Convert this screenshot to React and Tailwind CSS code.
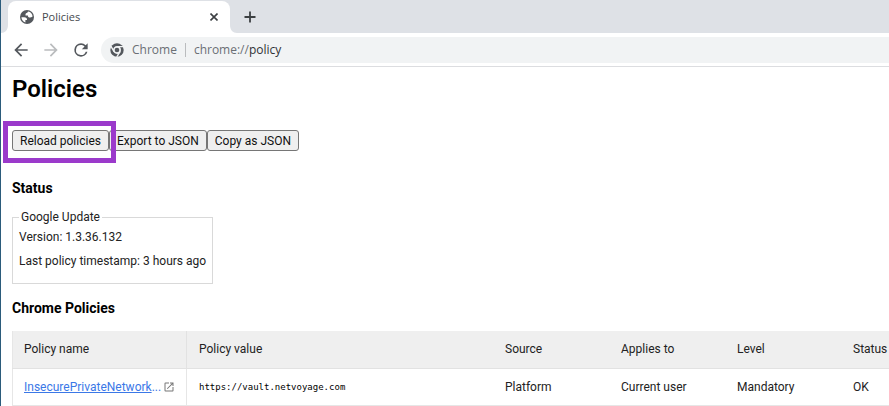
import React from "react";

function Globe() {
  return (
    <svg className="h-[14px] w-[14px] shrink-0" viewBox="0 0 14 14" aria-hidden="true">
      <circle cx="7" cy="7" r="7" fill="#54585d" />
      <path
        d="M1.400 7.200H4.200C6.200 7.200 7.200 8.100 7 10H5.400V12.400C3.200 11.800 1.500 9.800 1.400 7.200zM8.200 1.500C7.700 1.800 7.400 2.200 7.400 2.800 6 2.800 5.300 3.700 5.500 5.500H7.900C7.900 6.900 8.600 7.600 10 7.600 11 7.600 11.700 7.300 12.600 6.600 12.500 4.100 10.700 1.900 8.200 1.500z"
        fill="#fff"
      />
    </svg>
  );
}

function ChromeMark() {
  return (
    <svg className="h-[14px] w-[14px] shrink-0" viewBox="0 0 24 24" aria-hidden="true">
      <circle cx="12" cy="12" r="11.500" fill="#54585d" />
      <path d="M12 6.200H23M6.980 14.900L1.500 5.400M17.020 14.900L11.500 24" stroke="#f1f3f4" strokeWidth="2.400" />
      <circle cx="12" cy="12" r="5.400" fill="#54585d" stroke="#f1f3f4" strokeWidth="2.800" />
    </svg>
  );
}

function Icon({ d, className }) {
  return (
    <svg className={"shrink-0 " + className} viewBox="0 0 24 24" fill="currentColor" aria-hidden="true">
      <path d={d} />
    </svg>
  );
}

const BACK = "M20 11H7.830l5.590-5.590L12 4l-8 8 8 8 1.410-1.410L7.830 13H20v-2z";
const FORWARD = "M12 4l-1.410 1.410L16.170 11H4v2h12.170l-5.580 5.590L12 20l8-8z";
const RELOAD =
  "M17.650 6.350A7.958 7.958 0 0 0 12 4a8 8 0 1 0 7.730 10h-2.080A6 6 0 1 1 12 6c1.660 0 3.140.690 4.220 1.780L13 11h7V4l-2.350 2.350z";
const OPEN =
  "M19 19H5V5h7V3H5a2 2 0 0 0-2 2v14a2 2 0 0 0 2 2h14c1.100 0 2-.900 2-2v-7h-2v7zM14 3v2h3.590l-9.830 9.830 1.410 1.410L19 6.410V10h2V3h-7z";

function TabStrip() {
  return (
    <div className="flex h-[33px] items-end bg-[#dee1e6] pl-[7px] font-['Open_Sans',sans-serif]">
      <div className="relative flex h-8 w-[222px] items-center rounded-t-lg bg-white pl-3 pr-2">
        <Globe />
        <span className="ml-2 flex-1 text-[11px] text-[#45494d]">Policies</span>
        <button aria-label="Close tab" className="flex h-4 w-4 items-center justify-center">
          <svg className="h-2 w-2" viewBox="0 0 8 8" stroke="#3c4043" strokeWidth="1.600" aria-hidden="true">
            <path d="M.5.5l7 7M7.500.5l-7 7" />
          </svg>
        </button>
        <svg className="absolute -left-[7px] bottom-0 h-2 w-[7px]" viewBox="0 0 7 8" fill="#fff" aria-hidden="true">
          <path d="M7 0v8H0c4 0 7-3 7-8z" />
        </svg>
        <svg className="absolute -right-[7px] bottom-0 h-2 w-[7px]" viewBox="0 0 7 8" fill="#fff" aria-hidden="true">
          <path d="M0 0v8h7C3 8 0 5 0 0z" />
        </svg>
      </div>
      <button aria-label="New tab" className="ml-3 flex h-8 w-4 items-center justify-center">
        <svg className="h-3 w-3" viewBox="0 0 12 12" stroke="#3c4043" strokeWidth="1.800" aria-hidden="true">
          <path d="M6 .5v11M.5 6h11" />
        </svg>
      </button>
    </div>
  );
}

function Toolbar() {
  return (
    <div className="flex h-[34px] items-center gap-[10px] border-b border-[#dcdde0] bg-white pl-[10px] text-[#6b6f74]">
      <button aria-label="Back" className="text-[#54585d]">
        <Icon d={BACK} className="h-5 w-5" />
      </button>
      <button aria-label="Forward" className="text-[#babcbe]">
        <Icon d={FORWARD} className="h-5 w-5" />
      </button>
      <button aria-label="Reload" className="text-[#54585d]">
        <Icon d={RELOAD} className="h-5 w-5" />
      </button>
      <div className="flex h-[26px] flex-1 items-center rounded-l-full bg-[#f1f3f4] pl-[9px] font-['Open_Sans',sans-serif] text-[12px]">
        <ChromeMark />
        <span className="ml-2">Chrome</span>
        <span className="mx-2 h-[14px] w-px bg-[#babcbe]" />
        <label htmlFor="address">chrome://</label>
        <input id="address" defaultValue="policy" className="min-w-0 flex-1 bg-transparent text-[#303236] outline-none" />
      </div>
    </div>
  );
}

function PageButton({ children }) {
  return (
    <button className="h-[21px] rounded-[3px] border border-[#767676] bg-[#efefef] px-[7px] leading-[18px] text-[#111]">
      {children}
    </button>
  );
}

const HEADERS = ["Policy name", "Policy value", "Source", "Applies to", "Level", "Status"];

function PolicyTable() {
  return (
    <table className="mt-[15px] w-full table-fixed border-collapse border-l border-[#e6e6e6] text-left">
      <colgroup>
        <col className="w-[174px]" />
        <col />
        <col className="w-[116px]" />
        <col className="w-[116px]" />
        <col className="w-[116px]" />
        <col className="w-12" />
      </colgroup>
      <thead>
        <tr className="h-[37px] border-b border-[#e2e2e2] bg-[#efefef]">
          {HEADERS.map((h) => (
            <th key={h} className="whitespace-nowrap pl-3 font-normal first:border-r first:border-[#e2e2e2] first:pl-[11px]">
              {h}
            </th>
          ))}
        </tr>
      </thead>
      <tbody>
        <tr className="h-[37px] border-b border-[#e6e6e6]">
          <td className="border-r border-[#e6e6e6] pl-[11px]">
            <div className="flex items-center gap-[2px]">
              <a href="#policy" className="whitespace-nowrap text-[#3b78e7]">
                <span className="underline">InsecurePrivateNetwork</span>...
              </a>
              <Icon d={OPEN} className="h-3 w-3 text-[#777]" />
            </div>
          </td>
          <td className="pl-3 font-['DejaVu_Sans_Mono',monospace] text-[9px] text-black">https://vault.netvoyage.com</td>
          <td className="pl-3">Platform</td>
          <td className="pl-3">Current user</td>
          <td className="pl-3">Mandatory</td>
          <td className="pl-3">OK</td>
        </tr>
      </tbody>
    </table>
  );
}

export default function App() {
  return (
    <div className="min-h-screen overflow-hidden border-l border-[#2b5b7b] bg-white font-[Roboto,sans-serif] text-[12px] leading-4 text-[#222]">
      <TabStrip />
      <Toolbar />
      <main className="pl-[11px]">
        <h1 className="pt-2 text-[24px] font-semibold leading-7 text-black">Policies</h1>
        <div className="mt-[27px] flex">
          <div className="relative">
            <PageButton>Reload policies</PageButton>
            <div className="pointer-events-none absolute -bottom-3 -left-[9px] -right-[7px] -top-[9px] border-[5px] border-[#9b3acb]" />
          </div>
          <PageButton>Export to JSON</PageButton>
          <PageButton>Copy as JSON</PageButton>
        </div>
        <h2 className="mt-[29px] text-[14px] font-bold text-black">Status</h2>
        <fieldset className="mt-[13px] w-fit border border-[#d9d9d9] px-[6px] pb-[14px]">
          <legend className="px-[2px]">Google Update</legend>
          <p className="mt-1">Version: 1.3.36.132</p>
          <p className="mt-2">Last policy timestamp: 3 hours ago</p>
        </fieldset>
        <h2 className="mt-4 text-[14px] font-bold text-black">Chrome Policies</h2>
        <PolicyTable />
      </main>
    </div>
  );
}
